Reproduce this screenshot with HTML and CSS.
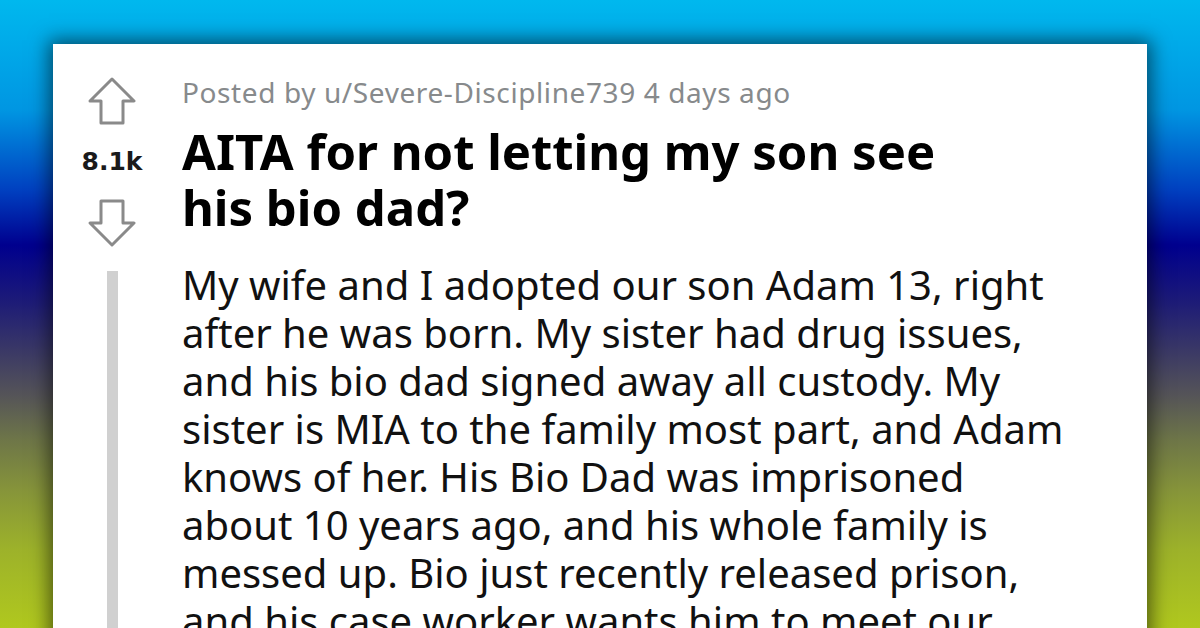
FILE: index.html
```html
<!DOCTYPE html>
<html lang="en">
<head>
    <meta charset="UTF-8">
    <title>AITA for not letting my son see his bio dad?</title>
    <link rel="stylesheet" href="styles.css">
</head>
<body>
    <div class="card">
        <!-- vote column -->
        <div class="votes">
            <svg class="arrow" viewBox="0 0 48 48" width="48" height="48">
                <path d="M24 2 L46 24 L35 24 L35 46 L13 46 L13 24 L2 24 Z"/>
            </svg>
            <div class="score">8.1k</div>
            <svg class="arrow" viewBox="0 0 48 48" width="48" height="48">
                <path d="M24 46 L46 24 L35 24 L35 2 L13 2 L13 24 L2 24 Z"/>
            </svg>
            <div class="thread-line"></div>
        </div>

        <div class="post">
            <div class="meta">Posted by u/Severe-Discipline739 4 days ago</div>
            <h1 class="title">AITA for not letting my son see<br>his bio dad?</h1>
            <p class="body-text">
                My wife and I adopted our son Adam 13, right<br>
                after he was born. My sister had drug issues,<br>
                and his bio dad signed away all custody. My<br>
                sister is MIA to the family most part, and Adam<br>
                knows of her. His Bio Dad was imprisoned<br>
                about 10 years ago, and his whole family is<br>
                messed up. Bio just recently released prison,<br>
                and his case worker wants him to meet our
            </p>
        </div>
    </div>
</body>
</html>
```

FILE: styles.css
```css
/* page background */
html, body {
    height: 100%;
}

body {
    margin: 0;
    overflow: hidden;
    background: linear-gradient(to bottom,
        #00b8ee 0px,
        #0096e2 110px,
        #0040c0 190px,
        #00008e 245px,
        #1c1a78 300px,
        #3a3866 350px,
        #555458 395px,
        #6e7648 440px,
        #86943a 490px,
        #9db22a 550px,
        #b0c81e 628px);
    font-family: "Noto Sans", "Open Sans", sans-serif;
    color: #111;
}

.card {
    margin: 44px 53px 0 53px;
    height: 600px;
    background: #fff;
    box-shadow: 0 0 18px 4px rgba(0, 0, 0, 0.55);
    display: flex;
}

/* left column with arrows */
.votes {
    width: 118px;
    display: flex;
    flex-direction: column;
    align-items: center;
    padding-top: 33px;
}

.arrow {
    display: block;
}

.arrow path {
    fill: none;
    stroke: #8a8a8a;
    stroke-width: 3;
    stroke-linejoin: round;
}

.score {
    font-family: "DejaVu Sans", sans-serif;
    font-weight: 700;
    font-size: 25px;
    color: #1a1a1b;
    margin: 22px 0 22px 0;
    line-height: 30px;
}

.thread-line {
    width: 11px;
    flex: 1;
    background: #d0d0d0;
    margin-top: 24px;
}

/* post content */
.post {
    margin-left: 11px;
    padding-top: 30px;
}

.meta {
    font-family: "Noto Sans", sans-serif;
    font-size: 28px;
    letter-spacing: 0.6px;
    color: #878a8c;
    line-height: 36px;
}

.title {
    font-family: "Noto Sans", sans-serif;
    font-weight: 700;
    font-size: 49px;
    line-height: 56px;
    margin: 13px 0 0 0;
    color: #000;
}

.body-text {
    font-family: "Noto Sans", "Open Sans", sans-serif;
    font-size: 40px;
    line-height: 48px;
    margin: 26px 0 0 0;
    color: #111;
}
```
